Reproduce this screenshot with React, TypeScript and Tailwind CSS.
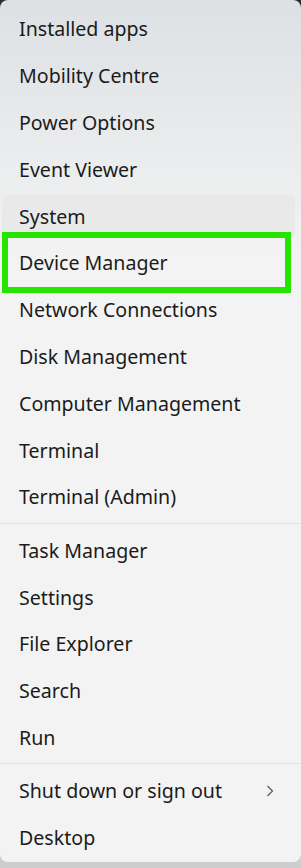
const groups: string[][] = [
  [
    "Installed apps",
    "Mobility Centre",
    "Power Options",
    "Event Viewer",
    "System",
    "Device Manager",
    "Network Connections",
    "Disk Management",
    "Computer Management",
    "Terminal",
    "Terminal (Admin)",
  ],
  ["Task Manager", "Settings", "File Explorer", "Search", "Run"],
  ["Shut down or sign out", "Desktop"],
];

function Item({ label }: { label: string }) {
  const hovered = label === "System";
  const marked = label === "Device Manager";
  const sub = label === "Shut down or sign out";
  return (
    <div className="relative h-[46.8px] flex items-stretch">
      {hovered && (
        <span className="absolute left-[2px] right-[6px] top-[2px] bottom-[2px] rounded-[5px] bg-[#e9e9e9]" />
      )}
      <div className="relative flex-1 flex items-center pl-[19px] pr-[26px] pt-[0.5px] text-[19.6px] text-[#1b1b1b]">
        <span className="flex-1">{label}</span>
        {sub && (
          <svg width="10" height="14" viewBox="0 0 10 14" className="text-[#5a5a5a]">
            <polyline points="2.5,2 7.5,7 2.5,12" fill="none" stroke="currentColor" strokeWidth="1.2" />
          </svg>
        )}
      </div>
      {marked && (
        <span className="absolute left-[2px] right-[10px] -top-[7.5px] -bottom-[6.5px] border-[6px] border-[#27e400]" />
      )}
    </div>
  );
}

export default function App() {
  return (
    <div className="w-[301px] h-[868px] bg-linear-to-b from-[#2c2c2c] from-1% to-[#cdcdcd] to-4%" style={{ fontFamily: '"Noto Sans", "Open Sans", sans-serif' }}>
      <div className="h-[862px] rounded-[8px] bg-linear-to-b from-[#dde1e4] to-[#f3f3f3] to-30% pt-[5.5px] overflow-hidden">
        {groups.map((g, i) => (
          <div key={i}>
            {i > 0 && (
              <div className="pt-[2.5px] pb-[3px]">
                <div className="h-px bg-[#e0e0e0]" />
              </div>
            )}
            {g.map((label) => (
              <Item key={label} label={label} />
            ))}
          </div>
        ))}
      </div>
    </div>
  );
}
